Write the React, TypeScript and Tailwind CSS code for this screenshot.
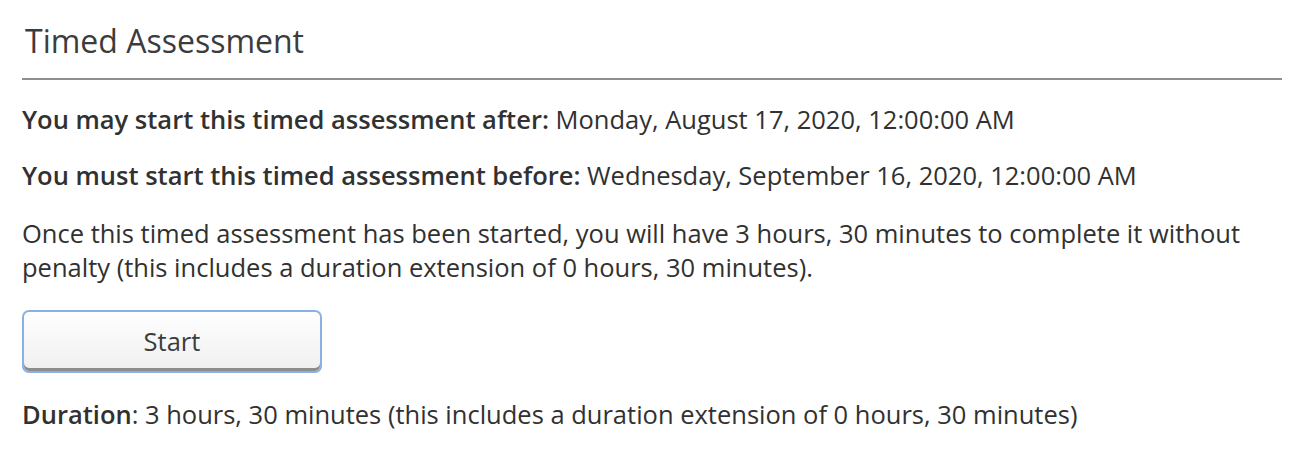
import React from "react";

export default function App() {
  return (
    <div className="w-[1300px] h-[460px] bg-white text-[#313131]" style={{ fontFamily: '"Open Sans", sans-serif' }}>
      <div className="pl-[22px] pr-[18px] pt-[20px]">
        <h2 className="text-[32px] leading-[42px] pl-[3px] text-[#3c3c3c] font-normal">Timed Assessment</h2>
        <div className="mt-[16px] h-[2px] bg-[#8e8e8e]" />
        <div className="text-[25.5px] leading-[34px]">
          <p className="mt-[22px]"><span className="font-semibold">You may start this timed assessment after:</span> Monday, August 17, 2020, 12:00:00 AM</p>
          <p className="mt-[22px]"><span className="font-semibold">You must start this timed assessment before:</span> Wednesday, September 16, 2020, 12:00:00 AM</p>
          <p className="mt-[24px] max-w-[1250px]">Once this timed assessment has been started, you will have 3 hours, 30 minutes to complete it without penalty (this includes a duration extension of 0 hours, 30 minutes).</p>
          <button className="mt-[26px] w-[300px] h-[63px] rounded-[7px] border-2 border-[#8ab1df] bg-gradient-to-b from-white to-[#efefef] shadow-[inset_0_-3px_0_#8c8c8c] text-[25.5px] text-[#3c3c3c] flex items-center justify-center pb-[2px]">Start</button>
          <p className="mt-[24px]"><span className="font-semibold">Duration</span>: 3 hours, 30 minutes (this includes a duration extension of 0 hours, 30 minutes)</p>
        </div>
      </div>
    </div>
  );
}
